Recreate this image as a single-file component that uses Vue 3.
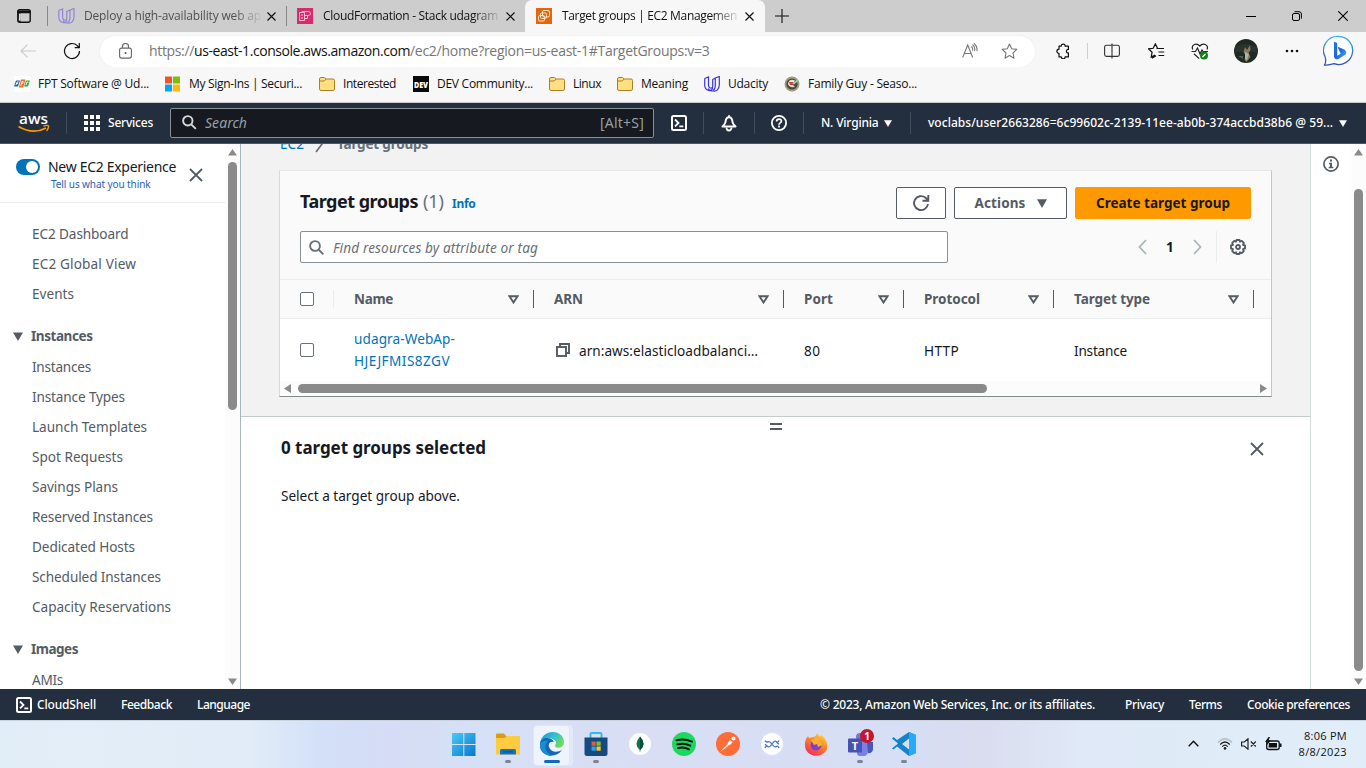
<script setup>
// Tunes letter-spacing so that a label takes exactly the given width.
const vFit = {
  mounted(el, { value }) {
    const natural = el.getBoundingClientRect().width
    el.style.letterSpacing = (value - natural) / el.textContent.length + 'px'
  }
}

const bookmarks = [
  { icon: 'fpt', label: 'FPT Software @ Ud...', w: 111 },
  { icon: 'ms', label: 'My Sign-Ins | Securi...', w: 113 },
  { icon: 'folder', label: 'Interested', w: 53 },
  { icon: 'dev', label: 'DEV Community...', w: 96 },
  { icon: 'folder', label: 'Linux', w: 28 },
  { icon: 'folder', label: 'Meaning', w: 47 },
  { icon: 'udacity', label: 'Udacity', w: 40 },
  { icon: 'guy', label: 'Family Guy - Seaso...', w: 109 }
]

const topLinks = [['EC2 Dashboard', 96.5], ['EC2 Global View', 104], ['Events', 42]]
const groups = [
  {
    title: 'Instances', w: 61.5,
    links: [
      ['Instances', 59], ['Instance Types', 93], ['Launch Templates', 115],
      ['Spot Requests', 91], ['Savings Plans', 86], ['Reserved Instances', 121],
      ['Dedicated Hosts', 103], ['Scheduled Instances', 129], ['Capacity Reservations', 139]
    ]
  },
  { title: 'Images', w: 47, links: [['AMIs', 31]] }
]
const columns = [['Name', 39], ['ARN', 29], ['Port', 29], ['Protocol', 56], ['Target type', 76]]
</script>

<template>
  <div class="screen">
    <header class="tabstrip">
      <svg class="workspaces" width="16" height="16" viewBox="0 0 16 16"><rect x="1.8" y="1.8" width="12.4" height="12.4" rx="2" fill="none" stroke="#111" stroke-width="1.4"/><path d="M1.5 2.5h13v2.7h-13zM1.5 4h3v10h-2z" fill="#111"/><rect x="2.9" y="5.6" width="1.8" height="7" fill="#ddd"/></svg>
      <i class="tab-sep"></i>
      <div class="tab first">
        <svg class="u-faded" width="17" height="16" viewBox="0 0 17 16"><path d="M.8 2.500 4.600 1v8c0 2.500 2 3.700 4 2.500M.8 2.500V9c0 6 8 8.200 8 1.500V3.500L12 2 16 .5v8c0 5-3 7-6 6.500-4 0-5-2.500-5-2.500M12 2v8c0 2-.8 3.600-2.200 4.600" fill="none" stroke="#8f87d6" stroke-width="1.200"/></svg>
        <div class="tab-label dim"><span v-fit="177">Deploy a high-availability web ap</span></div>
        <svg class="tab-x" width="9" height="9" viewBox="0 0 9 9"><path d="M.5.5l8 8M8.500.5l-8 8" stroke="#111" stroke-width="1.200"/></svg>
      </div>
      <i class="tab-sep"></i>
      <div class="tab second">
        <svg width="16" height="16" viewBox="0 0 16 16"><rect width="16" height="16" fill="#d82b6d"/><path d="M2.500 4.500h5v8h-5zM4 7h2M4 10h2M5 4.500V3.500h6c3 0 3.500 4 0 4H7.500M7.500 10.500h3v-3" fill="none" stroke="#f9bfd3" stroke-width="1"/></svg>
        <div class="tab-label"><span v-fit="175">CloudFormation - Stack udagram</span></div>
        <svg class="tab-x" width="9" height="9" viewBox="0 0 9 9"><path d="M.5.5l8 8M8.500.5l-8 8" stroke="#111" stroke-width="1.200"/></svg>
      </div>
      <div class="tab active">
        <svg width="16" height="16" viewBox="0 0 16 16"><rect width="16" height="16" fill="#e2680f"/><g fill="none" stroke="#ffe2c4" stroke-width="1"><rect x="6.500" y="2.500" width="7" height="6.500" rx="1.500"/><rect x="4.500" y="5" width="6" height="5.500" rx="1.200"/><rect x="2.500" y="7.500" width="6" height="5.500" rx="1.200"/></g></svg>
        <div class="tab-label"><span v-fit="175">Target groups | EC2 Managemen</span></div>
        <svg class="tab-x" width="9" height="9" viewBox="0 0 9 9"><path d="M.5.5l8 8M8.500.5l-8 8" stroke="#111" stroke-width="1.200"/></svg>
      </div>
      <svg class="plus" width="14" height="14" viewBox="0 0 14 14"><path d="M7 0v14M0 7h14" stroke="#111" stroke-width="1.100"/></svg>
      <div class="win-controls">
        <svg width="10" height="10" viewBox="0 0 10 10"><path d="M0 5.500h10" stroke="#000"/></svg>
        <svg width="10" height="10" viewBox="0 0 10 10"><rect x=".5" y="2.500" width="7" height="7" rx="1.500" fill="none" stroke="#000"/><path d="M2.500.7H7a2.400 2.400 0 0 1 2.400 2.400v4.500" fill="none" stroke="#000"/></svg>
        <svg width="10" height="10" viewBox="0 0 10 10"><path d="M.2.2l9.600 9.600M9.800.2.2 9.800" stroke="#000" stroke-width="1.100"/></svg>
      </div>
    </header>

    <div class="toolbar">
      <svg class="back" width="16" height="14" viewBox="0 0 16 14"><path d="M16 7H1M7.500.7 1 7l6.500 6.300" fill="none" stroke="#c9c9c9" stroke-width="1.100"/></svg>
      <svg class="reload" width="18" height="18" viewBox="0 0 18 18"><path d="M16.500 9A7.500 7.500 0 1 1 14.300 3.700L16 5.500M16.300 1v4.700h-4.600" fill="none" stroke="#111" stroke-width="1.200"/></svg>
      <div class="url">
        <svg class="lock" width="13" height="16" viewBox="0 0 13 16"><rect x=".6" y="5.100" width="11.800" height="10" rx="2" fill="none" stroke="#666" stroke-width="1.100"/><path d="M3.500 5V3.500a3 3 0 0 1 6 0V5" fill="none" stroke="#666" stroke-width="1.100"/><circle cx="6.500" cy="10" r="1" fill="#555"/></svg>
        <div class="address"><span v-fit="45">https://</span><span v-fit="216" class="host">us-east-1.console.aws.amazon.com</span><span v-fit="299.500">/ec2/home?region=us-east-1#TargetGroups:v=3</span></div>
        <svg class="read" width="17" height="16" viewBox="0 0 17 16"><path d="M.7 14.500 5.700 2l5 12.500M2.500 10.500h6.500M9.500 3.500q1.700 1.700 1 4.200M10.500 1.500q3.200 2.600 2 6.500M12 .3q4 3.500 2.800 7.700" fill="none" stroke="#777" stroke-width="1.100"/></svg>
        <svg class="star" width="17" height="16" viewBox="0 0 17 16"><path d="M8.500 1l2.200 4.800 5.100.6-3.800 3.600 1 5.200-4.500-2.600L4 15.200 5 10 1.200 6.400l5.100-.6z" fill="none" stroke="#777" stroke-width="1.100" stroke-linejoin="round"/></svg>
      </div>
      <div class="actions-bar">
        <svg class="a-puzzle" width="16" height="16" viewBox="0 0 16 16"><path d="M4 3.200h2.200a2 2 0 0 1 4 0h3.200v3.300h-.8a1.800 1.800 0 0 0 0 3.400h.8v4h-3.300a1.900 1.900 0 0 1-3.800 0H4v-3.500a2.100 2.100 0 0 1 0-4.200z" fill="none" stroke="#111" stroke-width="1.200" stroke-linejoin="round"/></svg>
        <i class="tool-sep"></i>
        <svg class="a-split" width="16" height="16" viewBox="0 0 16 16"><path d="M6.300 2.200H2.500A1.900 1.900 0 0 0 .6 4v7.500a1.900 1.900 0 0 0 1.900 1.900h3.800M9.700 2.200h3.800A1.900 1.900 0 0 1 15.400 4v7.500a1.900 1.900 0 0 1-1.900 1.900H9.700M8 .5v15M6 2.200h4M6 13.400h4" fill="none" stroke="#333" stroke-width="1.100"/></svg>
        <svg class="a-fav" width="17" height="16" viewBox="0 0 17 16"><path d="M9.700 5.500 7.300.9 5.200 5.300.6 5.900l3.500 3.300-.9 4.900 3.900-2M8.500 5.500h7.500M10.500 9h5.700M10.500 12.500h5.700M4 15.200l4-2.400" fill="none" stroke="#111" stroke-width="1.200"/></svg>
        <svg class="a-heart" width="18" height="17" viewBox="0 0 18 17"><path d="M.5 8.500h4L6.500 5l2.500 6 2-4 1 1.500h5M1.700 6.500C-.2 1.500 5.500-.8 8.800 3 12-.8 18 1.500 16 6.500M3 10.800l5.200 4.800" fill="none" stroke="#222" stroke-width="1.200"/><circle cx="13" cy="12.500" r="4" fill="#128217"/><path d="m11.500 14 3-3" stroke="#fff" stroke-width="1.300"/></svg>
        <svg class="a-photo" width="24" height="24" viewBox="0 0 24 24"><circle cx="12" cy="12" r="12" fill="#202923"/><path d="M1 8q10-6 22 0v5H1z" fill="#29342d"/><path d="m11 8 2 3 3-5 .5 5-2 3 2 4-4 5-2-2 1-5-2-3z" fill="#897a5b"/><path d="m11 13 4 2-2 6-2-1z" fill="#a5b5b8"/><path d="M4 17h5v3z" fill="#49614a"/></svg>
        <svg class="a-more" width="14" height="4" viewBox="0 0 14 4"><g fill="#111"><circle cx="2" cy="2" r="1.300"/><circle cx="7" cy="2" r="1.300"/><circle cx="12" cy="2" r="1.300"/></g></svg>
        <svg class="a-bing" width="32" height="32" viewBox="0 0 32 32"><defs><linearGradient id="bg1" x1="0" y1="0" x2="0" y2="1"><stop stop-color="#36b5f0"/><stop offset="1" stop-color="#324db8"/></linearGradient><linearGradient id="bg2" x1="0" y1="0" x2="1" y2="1"><stop stop-color="#1680e0"/><stop offset=".5" stop-color="#2463df"/><stop offset="1" stop-color="#35bdf5"/></linearGradient></defs><path d="M16 1.500a14 14 0 1 1-5 27.200Q5 30.500 1.500 30q2-3.500.7-8A14 14 0 0 1 16 1.500z" fill="#fff" stroke="url(#bg1)" stroke-width="1.300"/><path d="m11 6.500 3.200 1.500v12.700l3.500-2-2-4.200-1-2.700 6.500 2.600q3 1.700 1.500 5l-7.200 4.700q-3.500 1.200-4.500-2z" fill="url(#bg2)"/></svg>
      </div>
    </div>

    <nav class="bookmarks">
      <a v-for="b in bookmarks" :key="b.label">
        <svg width="16" height="16" viewBox="0 0 16 16">
          <g v-if="b.icon === 'fpt'"><rect width="16" height="16" fill="#fff"/><path d="M2 4.500h4l-2 6H0z" fill="#2466ae"/><path d="M7 3.500h4.500l-2.300 8H4.800z" fill="#ee6a28"/><path d="M12 4.500h4l-2 6h-4z" fill="#36a852"/><path d="m2 9 1-3h1.500M2.600 7.500h1.500M6.800 10 8 5.500h1.200L8.500 8M12 9l1-3h1.500" fill="none" stroke="#fff" stroke-width=".9"/></g>
          <g v-else-if="b.icon === 'ms'"><path d="M0 .5h7v7H0z" fill="#f35325"/><path d="M8 .5h7v7H8z" fill="#81bc06"/><path d="M0 8.500h7v7H0z" fill="#05a6f0"/><path d="M8 8.500h7v7H8z" fill="#ffba08"/></g>
          <g v-else-if="b.icon === 'folder'" fill="#ffdf80" stroke="#a98021"><path d="M.5 4V3A1.500 1.500 0 0 1 2 1.500h3.500L7.300 3H14a1.500 1.500 0 0 1 1.500 1.500v8.400a1.600 1.600 0 0 1-1.600 1.600H2.100A1.600 1.600 0 0 1 .5 12.900z"/><path d="M.7 5h4.500l2-2" fill="none"/></g>
          <g v-else-if="b.icon === 'dev'"><rect width="16" height="16" fill="#0a0a0a"/><text x="8" y="12" class="dev-text" textLength="14" lengthAdjust="spacingAndGlyphs">DEV</text></g>
          <path v-else-if="b.icon === 'udacity'" d="M.7 2.500 4.500 1v8c0 2.500 2 3.700 4 2.500M.7 2.500V9c0 6 8 8.200 8 1.500V3.500L11.300 2 15.300.5v8c0 5-3 7-6 6.500-4 0-5-2.500-5-2.500M11.300 2v8c0 2-.8 3.600-2.200 4.600" fill="none" stroke="#3b35de" stroke-width="1.200"/>
          <g v-else><circle cx="8" cy="8" r="7.500" fill="#a39a80"/><circle cx="8" cy="8" r="5.600" fill="#4a4a40"/><path d="M11 4.500Q6 2 4 7q0 5 7 4L8.500 8.500z" fill="#f0e5ce"/><path d="M5 6h4v3H6z" fill="#c3473f"/><path d="m9 8 5-4" stroke="#85d2bb" stroke-width="2"/></g>
        </svg>
        <span v-fit="b.w">{{ b.label }}</span>
      </a>
    </nav>

    <div class="awsnav">
      <svg class="aws-logo" width="32" height="22" viewBox="0 0 32 22"><text x="1" y="11.500" class="aws-text" textLength="29" lengthAdjust="spacingAndGlyphs">aws</text><path d="M.5 14.500q14.500 8.500 27.500 1.500" fill="none" stroke="#f90" stroke-width="1.900"/><path d="M25.500 14q4.500-1.300 5 0t-1.800 5" fill="none" stroke="#f90" stroke-width="1.400"/></svg>
      <i class="nav-sep s1"></i>
      <svg class="grid-icon" width="16" height="16" viewBox="0 0 16 16"><path d="M0 0h4v4H0zM6 0h4v4H6zM12 0h4v4h-4zM0 6h4v4H0zM6 6h4v4H6zM12 6h4v4h-4zM0 12h4v4H0zM6 12h4v4H6zM12 12h4v4h-4z" fill="#fff"/></svg>
      <span class="services"><span v-fit="45">Services</span></span>
      <div class="aws-search">
        <svg width="15" height="15" viewBox="0 0 15 15"><circle cx="5.800" cy="5.800" r="4.700" fill="none" stroke="#d5dbdb" stroke-width="1.900"/><path d="m9.300 9.300 4.500 4.500" stroke="#d5dbdb" stroke-width="1.900"/></svg>
        <em v-fit="42">Search</em><span v-fit="44">[Alt+S]</span>
      </div>
      <svg class="shell" width="16" height="16" viewBox="0 0 16 16"><rect x="1" y="1" width="14" height="14" rx="1.500" fill="none" stroke="#fff" stroke-width="2"/><path d="m4 4.500 3.500 3.500L4 11.300M8.300 11.300h4" fill="none" stroke="#fff" stroke-width="1.800"/></svg>
      <i class="nav-sep s2"></i>
      <svg class="bell" width="16" height="17" viewBox="0 0 16 17"><path d="M8 .3v2M8 2.300c-2.600 0-3.300 2-3.500 4.700Q4.300 9 1.500 11.500h13Q11.700 9 11.500 7C11.300 4.300 10.600 2.300 8 2.300z" fill="none" stroke="#fff" stroke-width="2" stroke-linejoin="round"/><path d="M5.500 12.500a2.500 3 0 0 0 5 0" fill="none" stroke="#fff" stroke-width="1.800"/></svg>
      <i class="nav-sep s3"></i>
      <svg class="help" width="16" height="16" viewBox="0 0 16 16"><circle cx="8" cy="8" r="7.100" fill="none" stroke="#fff" stroke-width="1.800"/><path d="M5.600 6.600C5.600 3.300 10.600 3.500 10.400 6.300 10.300 8 8 7.800 8 9.700M8 10.600v1.900" fill="none" stroke="#fff" stroke-width="1.700"/></svg>
      <i class="nav-sep s4"></i>
      <span class="region"><span v-fit="57.500">N. Virginia</span></span>
      <svg class="caret" width="8" height="7" viewBox="0 0 8 7"><path d="M0 .3h8L4 7z" fill="#fff"/></svg>
      <i class="nav-sep s5"></i>
      <span class="account"><span v-fit="405">voclabs/user2663286=6c99602c-2139-11ee-ab0b-374accbd38b6 @ 59...</span></span>
      <svg class="caret" width="8" height="7" viewBox="0 0 8 7"><path d="M0 .3h8L4 7z" fill="#fff"/></svg>
    </div>

    <div class="workspace">
      <aside class="sidebar">
        <div class="side-body">
          <div class="side-top">
            <i class="toggle"></i>
            <div class="exp">
              <div class="exp-title"><span v-fit="128">New EC2 Experience</span></div>
              <div class="exp-link"><span v-fit="99.500">Tell us what you think</span></div>
            </div>
            <svg width="14" height="14" viewBox="0 0 14 14"><path d="m1 1 12 12M13 1 1 13" stroke="#545b64" stroke-width="1.800"/></svg>
          </div>
          <ul class="links first-links"><li v-for="l in topLinks" :key="l[0]"><span v-fit="l[1]">{{ l[0] }}</span></li></ul>
          <section v-for="g in groups" :key="g.title">
            <h4><svg width="10" height="9" viewBox="0 0 10 9"><path d="M0 .5h10L5 9z" fill="#545b64"/></svg><span v-fit="g.w">{{ g.title }}</span></h4>
            <ul class="links"><li v-for="l in g.links" :key="l[0]"><span v-fit="l[1]">{{ l[0] }}</span></li></ul>
          </section>
        </div>
        <div class="vscroll side-scroll">
          <svg width="9" height="7" viewBox="0 0 9 7"><path d="M4.500 0 9 6.500H0z" fill="#8a8a8a"/></svg>
          <i class="thumb"></i>
          <svg class="down" width="9" height="7" viewBox="0 0 9 7"><path d="M4.500 7 9 .5H0z" fill="#8a8a8a"/></svg>
        </div>
      </aside>

      <main class="main">
        <div class="upper">
          <div class="crumbs">
            <a v-fit="24">EC2</a>
            <svg width="11" height="14" viewBox="0 0 11 14"><path d="M10 1 1 13" stroke="#687078" stroke-width="1.700"/></svg>
            <b v-fit="91">Target groups</b>
          </div>
          <div class="card">
            <div class="card-head">
              <h1 v-fit="118">Target groups</h1><span class="count"><span v-fit="21">(1)</span></span><a class="info"><span v-fit="23.500">Info</span></a>
              <div class="buttons">
                <button class="btn refresh"><svg width="18" height="18" viewBox="0 0 18 18"><path d="M16 10A7 7 0 1 1 13.500 3.700L16 6M16.300 1v5.800h-5.800" fill="none" stroke="#545b64" stroke-width="1.900"/></svg></button>
                <button class="btn act"><span v-fit="51">Actions</span><svg width="10" height="9" viewBox="0 0 10 9"><path d="M0 .3h10L5 9z" fill="#545b64"/></svg></button>
                <button class="btn primary"><span v-fit="134">Create target group</span></button>
              </div>
            </div>
            <div class="filter-row">
              <div class="filter"><svg width="15" height="15" viewBox="0 0 15 15"><circle cx="6" cy="6" r="4.900" fill="none" stroke="#687078" stroke-width="1.900"/><path d="m9.500 9.500 4.800 4.800" stroke="#687078" stroke-width="1.900"/></svg><em v-fit="205">Find resources by attribute or tag</em></div>
              <svg class="prev" width="9" height="16" viewBox="0 0 9 16"><path d="M8 1 1.500 8 8 15" fill="none" stroke="#aab7b8" stroke-width="1.800"/></svg>
              <b class="page">1</b>
              <svg class="next" width="9" height="16" viewBox="0 0 9 16"><path d="m1 1 6.500 7L1 15" fill="none" stroke="#aab7b8" stroke-width="1.800"/></svg>
              <i class="pref-sep"></i>
              <svg class="gear" width="16" height="16" viewBox="0 0 16 16"><path d="M6.500 1h3l.5 1.700 1.800-.8 2 2-.8 1.900 2 .7v3l-2 .7.8 1.900-2 2-1.800-.8-.5 1.700h-3L6 13.300l-1.800.8-2-2 .8-1.900-2-.7v-3l2-.7-.8-1.900 2-2 1.800.8z" fill="none" stroke="#545b64" stroke-width="1.900" stroke-linejoin="round"/><circle cx="8" cy="8" r="2" fill="none" stroke="#545b64" stroke-width="1.800"/></svg>
            </div>
            <div class="trow thead">
              <div class="cell check"><i class="box"></i></div>
              <div v-for="c in columns" :key="c[0]" class="cell"><b v-fit="c[1]">{{ c[0] }}</b><svg width="11" height="9" viewBox="0 0 11 9"><path d="M1.400 1.200h8.200L5.500 7.500z" fill="none" stroke="#545b64" stroke-width="1.900"/></svg></div>
            </div>
            <div class="trow tbody">
              <div class="cell check"><i class="box"></i></div>
              <div class="cell name"><a><span v-fit="101">udagra-WebAp-</span><br><span v-fit="96">HJEJFMIS8ZGV</span></a></div>
              <div class="cell arn"><svg width="14" height="14" viewBox="0 0 14 14"><rect x="1" y="4" width="9" height="9" fill="none" stroke="#545b64" stroke-width="1.900"/><path d="M4 4V1h9v9h-3" fill="none" stroke="#545b64" stroke-width="1.900"/></svg><span v-fit="179">arn:aws:elasticloadbalanci…</span></div>
              <div class="cell"><span v-fit="16.500">80</span></div>
              <div class="cell"><span v-fit="35">HTTP</span></div>
              <div class="cell"><span v-fit="53">Instance</span></div>
            </div>
            <div class="hscroll">
              <svg width="7" height="9" viewBox="0 0 7 9"><path d="M0 4.500 7 0v9z" fill="#8a8a8a"/></svg>
              <i></i>
              <svg class="right" width="7" height="9" viewBox="0 0 7 9"><path d="M7 4.500 0 0v9z" fill="#8a8a8a"/></svg>
            </div>
          </div>
        </div>
        <div class="split">
          <i class="handle"></i>
          <div class="split-head"><h2 v-fit="205">0 target groups selected</h2><svg width="14" height="14" viewBox="0 0 14 14"><path d="m1 1 12 12M13 1 1 13" stroke="#545b64" stroke-width="1.800"/></svg></div>
          <p><span v-fit="179">Select a target group above.</span></p>
        </div>
      </main>

      <aside class="rail">
        <svg class="info-i" width="16" height="16" viewBox="0 0 16 16"><circle cx="8" cy="8" r="7.100" fill="none" stroke="#545b64" stroke-width="1.700"/><path d="M7 3.500h2v2H7zM6 6.700h3v4h1.300v1.500H5.700v-1.500H7V8.200H6z" fill="#545b64"/></svg>
        <div class="vscroll page-scroll">
          <svg width="9" height="7" viewBox="0 0 9 7"><path d="M4.500 0 9 6.500H0z" fill="#8a8a8a"/></svg>
          <i class="thumb"></i>
          <svg class="down" width="9" height="7" viewBox="0 0 9 7"><path d="M4.500 7 9 .5H0z" fill="#8a8a8a"/></svg>
        </div>
      </aside>
    </div>

    <footer class="foot">
      <svg width="16" height="16" viewBox="0 0 16 16"><rect x="1" y="1" width="14" height="14" rx="1.500" fill="none" stroke="#fff" stroke-width="2"/><path d="m4 4.500 3.500 3.500L4 11.300M8.300 11.300h4" fill="none" stroke="#fff" stroke-width="1.800"/></svg>
      <div class="f-left"><span v-fit="59">CloudShell</span><span v-fit="51">Feedback</span><span v-fit="53">Language</span></div>
      <div class="f-right"><span v-fit="275">© 2023, Amazon Web Services, Inc. or its affiliates.</span><span v-fit="39">Privacy</span><span v-fit="33">Terms</span><span v-fit="103">Cookie preferences</span></div>
    </footer>

    <div class="taskbar">
      <div class="apps">
        <div class="app"><svg width="24" height="24" viewBox="0 0 24 24"><defs><linearGradient id="win" x1="0" y1="0" x2="1" y2="1"><stop stop-color="#4cc9f5"/><stop offset="1" stop-color="#0677cf"/></linearGradient></defs><path d="M0 1h11.300v11H0zM12.300 1h11.200v11H12.300zM0 13h11.300v11H0zM12.300 13h11.200v11H12.300z" fill="url(#win)"/></svg></div>
        <div class="app run"><svg width="24" height="24" viewBox="0 0 24 24"><path d="M0 2.500q0-1 1-1h7l2.500 3V8H0z" fill="#d99a15"/><path d="M0 6h8.500l2.500-2h13v18.500H0z" fill="#fccb3f"/><path d="M4 22.500v-4q0-1.500 1.500-1.500h13q1.500 0 1.500 1.500v4z" fill="#1272c4"/><path d="M7 19h10v1.500H7z" fill="#075a9f"/></svg></div>
        <div class="app run current"><svg width="24" height="24" viewBox="0 0 24 24"><defs><linearGradient id="ed" x1="0" y1="0" x2="1" y2=".6"><stop stop-color="#1991dc"/><stop offset=".55" stop-color="#2fc3d2"/><stop offset="1" stop-color="#72dc55"/></linearGradient></defs><path d="M0 12C1-3 23-4 24 10c0 7-9 7-9 3.500 0-1 1-1 1-3C16 6 3 3 0 12z" fill="url(#ed)"/><path d="M0 12c1-8 12-7 14-2-4-1-6 2-5 5 1.500 5 8 6 13 3-6 9-23 7-22-6z" fill="#1468b7"/><path d="M8 9c-6 6-1 14 6 15-6 1-14-3-14-11 1-3 4-5 8-4z" fill="#168ed8"/></svg></div>
        <div class="app run"><svg width="24" height="24" viewBox="0 0 24 24"><path d="M6.500 7V2q0-1 1-1h9q1 0 1 1v5" fill="none" stroke="#35b9ed" stroke-width="2"/><path d="M.5 5.500h23v16q0 2.500-2.500 2.500H3Q.5 24 .5 21.500z" fill="#174b80"/><path d="M7.500 9.500h4.200v4.200H7.500z" fill="#f05732"/><path d="M12.500 9.500h4.200v4.200h-4.200z" fill="#81bd2d"/><path d="M7.500 14.500h4.200v4.200H7.500z" fill="#21a8e8"/><path d="M12.500 14.500h4.200v4.200h-4.200z" fill="#fbc329"/></svg></div>
        <div class="app"><svg width="24" height="24" viewBox="0 0 24 24"><circle cx="12" cy="12" r="11" fill="#fff"/><path d="M12 4.500q7 7.500 0 14Q5 12 12 4.500z" fill="#12734f"/><path d="M12 4.500q7 7.500 0 14z" fill="#075039"/><path d="M12 17.500v2.500" stroke="#8fa39a"/></svg></div>
        <div class="app"><svg width="24" height="24" viewBox="0 0 24 24"><circle cx="12" cy="12" r="12" fill="#1ed760"/><path d="M4.500 8.200q7.500-2.200 15.500 1.500M5.300 12.300q7-1.800 13 1.300M6 16q6-1.500 11 1.300" fill="none" stroke="#07130b" stroke-width="2" stroke-linecap="round"/></svg></div>
        <div class="app"><svg width="24" height="24" viewBox="0 0 24 24"><circle cx="12" cy="12" r="12" fill="#ff6c37"/><path d="m4.500 19.500 3-3.500 6.500-6.500 1.500 1.500-7 6z" fill="#ffeee7"/><circle cx="17.500" cy="6.500" r="2" fill="#fff"/><path d="m14 8 2.500 2.300-3 3-2-2.300z" fill="#fff"/></svg></div>
        <div class="app"><svg width="24" height="24" viewBox="0 0 24 24"><circle cx="12" cy="12" r="11" fill="#fff"/><path d="M5 8.500q1 2 3 1.300t4 2.300l1.500 1.800q1.500 1.500 3 .5t2.500 1.600M5 16q1-2.500 2.500-1.500t3-.6l3-3.800q1.500-1.600 3-.4T19 8.500M5 12.200l2.500 2M19 12.200l-2.500-2" fill="none" stroke="#4a78c4" stroke-width="1.300"/></svg></div>
        <div class="app"><svg width="24" height="24" viewBox="0 0 24 24"><defs><linearGradient id="ff" x1=".8" y1="0" x2=".2" y2="1"><stop stop-color="#ffdc35"/><stop offset=".5" stop-color="#ff792d"/><stop offset="1" stop-color="#ef275f"/></linearGradient></defs><path d="m13 1 3 4 1-2c6 4 8 11 5 16-5 7-16 6-20-1C0 13 1 7 4 4l1 2 4-1q3 0 4-4z" fill="url(#ff)"/><circle cx="12" cy="13" r="5.500" fill="#8040cb"/><path d="m7 8 4-1-1-2q8 1 8 8l-4 2-1-3-3 1z" fill="#ffae2f"/></svg></div>
        <div class="app run teams"><svg width="26" height="24" viewBox="0 0 26 24"><circle cx="13" cy="5" r="4" fill="#7278d3"/><path d="M10 9h11v9a6 6 0 0 1-11 4z" fill="#7b80e4"/><path d="M20 10h6v7a4 4 0 0 1-5 4z" fill="#4e55b8"/><rect x="1" y="6.500" width="14" height="14" rx="1" fill="#4851b6"/><text x="8" y="17.500" class="t-text">T</text></svg><b class="badge">1</b></div>
        <div class="app run"><svg width="24" height="24" viewBox="0 0 24 24"><path d="M17 0 24 3v18l-7 3L5 14.500l-3.500 3-1.500-1 6-5-6-5 1.500-1.500L5 8zM17 6.500 10 12l7 5.500z" fill="#1384ca"/><path d="m17 0 7 3v18l-7 3z" fill="#29a9f2"/></svg></div>
      </div>
      <div class="tray">
        <svg class="chev" width="11" height="7" viewBox="0 0 11 7"><path d="m.7 6.200 4.800-4.900 4.800 4.900" fill="none" stroke="#111" stroke-width="1.400"/></svg>
        <svg class="wifi" width="16" height="13" viewBox="0 0 16 13"><path d="M1 5.500q7-7.500 14 0" fill="none" stroke="#b3bdc8" stroke-width="1.300"/><path d="M3.200 7.500q4.800-5 9.600 0M5.300 9.600q2.700-2.800 5.400 0" fill="none" stroke="#222" stroke-width="1.300"/><circle cx="8" cy="11.400" r="1.300" fill="#222"/></svg>
        <svg class="speaker" width="16" height="12" viewBox="0 0 16 12"><path d="M.6 4h2.700L7 .8v10.400L3.300 8H.6zM9.800 3.500l5 5M14.800 3.500l-5 5" fill="none" stroke="#222" stroke-width="1.200"/></svg>
        <svg class="battery" width="17" height="14" viewBox="0 0 17 14"><rect x="1.700" y="4" width="12.500" height="8.500" rx="2" fill="none" stroke="#111" stroke-width="1.300"/><path d="M4 6h8v4.500H3.500zM14.500 6.500h2v3.500h-2z" fill="#111"/><path d="M3.500 0 0 5h2.500L1.500 8.500 6 3.500H3.500L5 0z" fill="#111"/></svg>
        <div class="clock"><div><span v-fit="43">8:06 PM</span></div><div><span v-fit="48.500">8/8/2023</span></div></div>
      </div>
    </div>
  </div>
</template>

<style>
body { margin: 0; overflow: hidden; }
</style>

<style scoped>
.screen { width: 1366px; height: 768px; display: flex; flex-direction: column; overflow: hidden; background: #fff; font-family: "Noto Sans", "Open Sans", sans-serif; font-size: 13.600px; color: #16191f; }
.screen * { box-sizing: border-box; }
svg { display: block; flex: none; }
span, b, em, h1, h2 { white-space: nowrap; }
i { flex: none; }
[class*="sep"] { display: block; }

.tabstrip { height: 32px; flex: none; display: flex; align-items: center; background: #cdcdcd; font-family: "Open Sans", sans-serif; font-size: 12px; color: #111; }
.workspaces { margin-left: 16px; }
.tab-sep { width: 1px; height: 20px; margin-left: 15px; background: #888; }
.tab { display: flex; align-items: center; height: 32px; width: 238px; }
.tab.first { padding-left: 10px; width: 223px; }
.tab.second { padding-left: 10px; }
.tab-label { flex: none; width: 180px; margin: 0 3px 2px 10px; white-space: nowrap; -webkit-mask-image: linear-gradient(90deg, #000 150px, transparent 179px); mask-image: linear-gradient(90deg, #000 150px, transparent 179px); }
.tab-label span { display: inline-block; }
.dim { color: #505050; }
.first .tab-label { margin-left: 9px; }
.active { background: #f7f7f7; width: 240px; padding-left: 11px; border-radius: 7px 7px 0 0; }
.plus { margin-left: 10px; }
.win-controls { display: flex; gap: 36px; margin-left: auto; margin-right: 18px; }

.toolbar { height: 35px; flex: none; background: #f7f7f7; display: flex; align-items: center; padding-top: 3px; }
.back { margin-left: 20px; }
.reload { margin-left: 27px; }
.url { width: 935px; height: 31px; margin-left: 19px; border-radius: 16px; background: #fff; display: flex; align-items: center; padding-left: 19px; box-shadow: 0 0 2px #e6e6e6; }
.address { margin-left: 17px; margin-bottom: 1px; width: 560px; white-space: nowrap; font-family: "Open Sans", sans-serif; font-size: 14px; color: #767676; }
.address span { display: inline-block; }
.address .host { color: #111; }
.read { margin-left: 253px; }
.star { margin-left: 22px; }
.actions-bar { display: flex; align-items: center; height: 32px; }
.a-puzzle { margin-left: 20px; }
.tool-sep { width: 1px; height: 16px; margin-left: 16px; background: #cfcfcf; }
.a-split { margin-left: 16px; }
.a-fav { margin-left: 28px; }
.a-heart { margin-left: 26px; }
.a-photo { margin-left: 25px; }
.a-more { margin-left: 27px; }
.a-bing { margin-left: 24px; }

.bookmarks { height: 36px; flex: none; background: #f7f7f7; border-bottom: 1px solid #c8cbd0; padding: 0 0 1px 14px; display: grid; grid-template-columns: 151px 154px 94px 136px 68px 87px 80px 150px; align-items: center; font-family: "Open Sans", sans-serif; font-size: 12px; color: #111; }
.bookmarks a { display: flex; align-items: center; gap: 8px; }
.bookmarks span { margin-bottom: 1px; }
.dev-text { font: 800 9px "Open Sans", sans-serif; fill: #fff; text-anchor: middle; }

.awsnav { height: 41px; flex: none; background: #232f3e; border-bottom: 1px solid #4b5663; display: flex; align-items: center; color: #fff; font-size: 12px; font-weight: 500; }
.aws-logo { margin-left: 18px; overflow: visible; }
.aws-text { font: 600 15px "Open Sans", sans-serif; fill: #fff; }
.nav-sep { width: 1px; height: 22px; background: #424d5a; }
.s1 { margin-left: 16px; }
.grid-icon { margin-left: 17px; }
.services { width: 70px; padding-left: 8px; }
.services span, .region span, .account span { display: inline-block; margin-bottom: 1px; }
.aws-search { width: 484px; height: 30px; border: 1px solid #879196; border-radius: 2px; background: #16191f; display: flex; align-items: center; padding: 0 9px 1px 11px; color: #95a0a8; font-size: 14px; }
.aws-search em { margin-left: 8px; font-weight: 400; }
.aws-search span { margin-left: auto; font-weight: 400; }
.shell { margin-left: 17px; }
.s2 { margin-left: 16px; }
.bell { margin-left: 17px; }
.s3 { margin-left: 17px; }
.help { margin-left: 16px; }
.s4 { margin-left: 16px; }
.region { margin-left: 17px; width: 63px; }
.s5 { margin-left: 18px; }
.account { margin-left: 17px; width: 411px; }

.workspace { height: 545px; flex: none; display: flex; overflow: hidden; }
.sidebar { width: 241px; flex: none; display: flex; border-right: 1px solid #aab7b8; background: #fff; }
.side-body { width: 225px; flex: none; overflow: hidden; }
.side-top { height: 59px; border-bottom: 1px solid #eaeded; display: flex; padding-left: 16px; }
.side-top svg { margin: 24px 0 0 13px; }
.toggle { width: 24px; height: 16px; border-radius: 8px; background: #0073bb; margin-top: 15px; padding: 2px; display: flex; justify-content: flex-end; }
.toggle::after { content: ""; width: 12px; height: 12px; border-radius: 50%; background: #fff; }
.exp { width: 128px; margin-left: 8px; padding-top: 13px; }
.exp-title { font-size: 14px; line-height: 20px; }
.exp-title span, .exp-link span { display: inline-block; }
.exp-link { font-size: 10px; line-height: 14px; padding-left: 3px; color: #2a62b5; }
.links { list-style: none; margin: 0; padding: 0 0 0 32px; color: #545b64; }
.links li { height: 30px; line-height: 30px; }
.links span { display: inline-block; }
.first-links { padding-top: 16px; }
section h4 { margin: 12px 0 1px; height: 30px; display: flex; align-items: center; gap: 8px; padding-left: 13px; color: #545b64; font-size: 13.500px; font-weight: 700; }
.vscroll { width: 15px; flex: none; background: #fcfcfc; display: flex; flex-direction: column; align-items: center; padding: 5px 0 4px; }
.thumb { width: 9px; border-radius: 5px; background: #8a8a8a; }
.side-scroll .thumb { height: 248px; margin-top: 6px; }
.page-scroll .thumb { height: 482px; margin-top: 33px; }
.down { margin-top: auto; }

.main { width: 1069px; flex: none; display: flex; flex-direction: column; }
.upper { height: 273px; background: #f2f2f2; border-bottom: 1px solid #c4cbcc; padding: 0 38px; overflow: hidden; }
.crumbs { height: 26px; display: flex; align-items: flex-start; color: #687078; padding-left: 1px; }
.crumbs a { color: #0073bb; width: 24px; white-space: nowrap; margin-top: -9px; line-height: 18px; }
.crumbs svg { margin: -5px 11px 0; }
.crumbs b { margin-top: -9px; line-height: 18px; font-size: 13.500px; }
.card { width: 993px; height: 227px; background: #fafafa; border: 1px solid #e5e7e7; border-right-color: #c2c7c7; border-bottom-color: #858b8b; border-left-color: #d5dbdb; }
.card-head { height: 60px; padding: 16px 20px 0 20px; display: flex; }
h1 { margin: -1px 0 0; font-size: 18px; line-height: 30px; font-weight: 700; height: 30px; }
.count { margin: -1px 0 0 5px; font-size: 18px; line-height: 30px; color: #687078; width: 21px; }
.info { margin-left: 8px; font-size: 12px; line-height: 34px; color: #0073bb; font-weight: 700; }
.count span, .info span { display: inline-block; }
.buttons { display: flex; gap: 8px; margin-left: auto; }
.btn { height: 32px; padding: 0; border: 1px solid #545b64; border-radius: 2px; background: #fff; display: flex; align-items: center; justify-content: center; font: 700 13.500px "Noto Sans", sans-serif; color: #545b64; }
.refresh { width: 50px; }
.act { width: 113px; gap: 11px; }
.primary { width: 176px; background: #f90; border-color: #f90; color: #16191f; }
.filter-row { height: 48px; padding-left: 20px; display: flex; align-items: flex-start; }
.filter { width: 648px; height: 32px; border: 1px solid #879196; border-radius: 2px; background: #fff; display: flex; align-items: center; padding-left: 8px; gap: 9px; color: #687078; }
.prev { margin: 8px 0 0 190px; }
.page { width: 8px; margin-left: 19px; line-height: 32px; }
.next { margin: 8px 0 0 19px; }
.pref-sep { width: 1px; height: 32px; margin-left: 14px; background: #eaeded; }
.gear { margin: 8px 0 0 13px; }
.trow { display: grid; grid-template-columns: 54px 200px 250px 120px 150px 200px; height: 40px; overflow: hidden; padding-left: 1px; }
.thead { border-top: 1px solid #eaeded; border-bottom: 1px solid #eaeded; color: #545b64; font-size: 13.500px; }
.thead .cell { border-right: 0; display: flex; justify-content: space-between; align-items: center; padding: 0 0 0 19px; }
.thead .cell::after { content: ""; width: 1px; height: 18px; background: #545b64; margin-left: 14px; margin-right: 1px; }
.thead .cell svg { margin-left: auto; }
.thead .check::after { background: #eaeded; margin-right: 1px; }
.box { width: 14px; height: 14px; border: 1px solid #687078; border-radius: 2px; background: #fff; display: block; }
.tbody { height: 62px; background: #fff; align-items: center; }
.tbody .cell { padding-left: 19px; }
.name a { color: #0073bb; line-height: 22px; }
.name span, .tbody .cell > span { display: inline-block; }
.arn { display: flex; align-items: center; }
.arn svg { margin-left: 2px; }
.arn span { margin-left: 9px; }
.hscroll { height: 15px; display: flex; align-items: center; background: #fcfcfc; padding: 0 4px 1px; }
.hscroll i { width: 689px; height: 9px; border-radius: 5px; background: #8a8a8a; margin-left: 7px; }
.right { margin-left: auto; }
.split { flex: 1; background: #fff; padding: 6px 40px 0; }
.handle { display: block; width: 12px; height: 7px; margin: 0 auto; border-top: 2px solid #545b64; border-bottom: 2px solid #545b64; }
.split-head { margin-top: 5px; height: 28px; display: flex; align-items: center; justify-content: space-between; padding-right: 6px; }
h2 { margin: 0 0 3px; font-size: 17px; font-weight: 700; }
.split p { margin: 22px 0 0; line-height: 22px; }
.split p span { display: inline-block; }
.rail { width: 56px; flex: none; display: flex; border-left: 1px solid #d5dbdb; }
.info-i { margin: 12px 12px 0; }

.foot { height: 31px; flex: none; background: #232f3e; color: #fff; display: flex; align-items: center; padding: 0 16px; font-size: 12px; font-weight: 500; }
.f-left { display: flex; gap: 25px; margin-left: 5px; }
.f-right { display: flex; margin-left: auto; }
.f-right span + span { margin-left: 25px; }
.f-right span:nth-child(2) { margin-left: 30px; }

.taskbar { height: 48px; flex: none; border-top: 1px solid #cbd4de; display: flex; align-items: center; background: linear-gradient(90deg, #e2eef7 0, #e2ecf8 250px, #d3e1f8 320px, #d6dcf5 390px, #d5e0f6 460px, #d9def4 650px, #d6dff5 900px, #dadcef 980px, #dfe9f7 1080px, #e1eef9 1366px); }
.apps { display: flex; margin-left: 442px; }
.app { position: relative; width: 44px; height: 47px; display: flex; align-items: center; justify-content: center; padding-bottom: 2px; }
.run::after { content: ""; position: absolute; left: 19px; bottom: 5px; width: 6px; height: 3px; border-radius: 2px; background: #7c8594; }
.current::before { content: ""; position: absolute; left: 3px; top: 4px; width: 35px; height: 39px; border-radius: 4px; background: #eef3fc; border: 1px solid #e0e6f2; box-shadow: 3px 0 0 #e3e9f7; }
.current svg { position: relative; }
.current.run::after { left: 14px; width: 16px; background: #0b6cbd; }
.t-text { font: 700 11px "Open Sans", sans-serif; fill: #fff; text-anchor: middle; }
.badge { position: absolute; left: 22px; top: 8px; width: 14px; height: 14px; border-radius: 50%; background: #c4162e; color: #fff; font-size: 10px; line-height: 14px; text-align: center; }
.tray { display: flex; align-items: center; margin-left: auto; margin-right: 19px; padding-bottom: 2px; color: #111; }
.wifi { margin-left: 18px; }
.speaker { margin-left: 8px; }
.battery { margin-left: 8px; }
.clock { width: 62px; margin-left: 3px; text-align: right; font: 11px/16px "Open Sans", sans-serif; }
.clock span { display: inline-block; }
</style>
